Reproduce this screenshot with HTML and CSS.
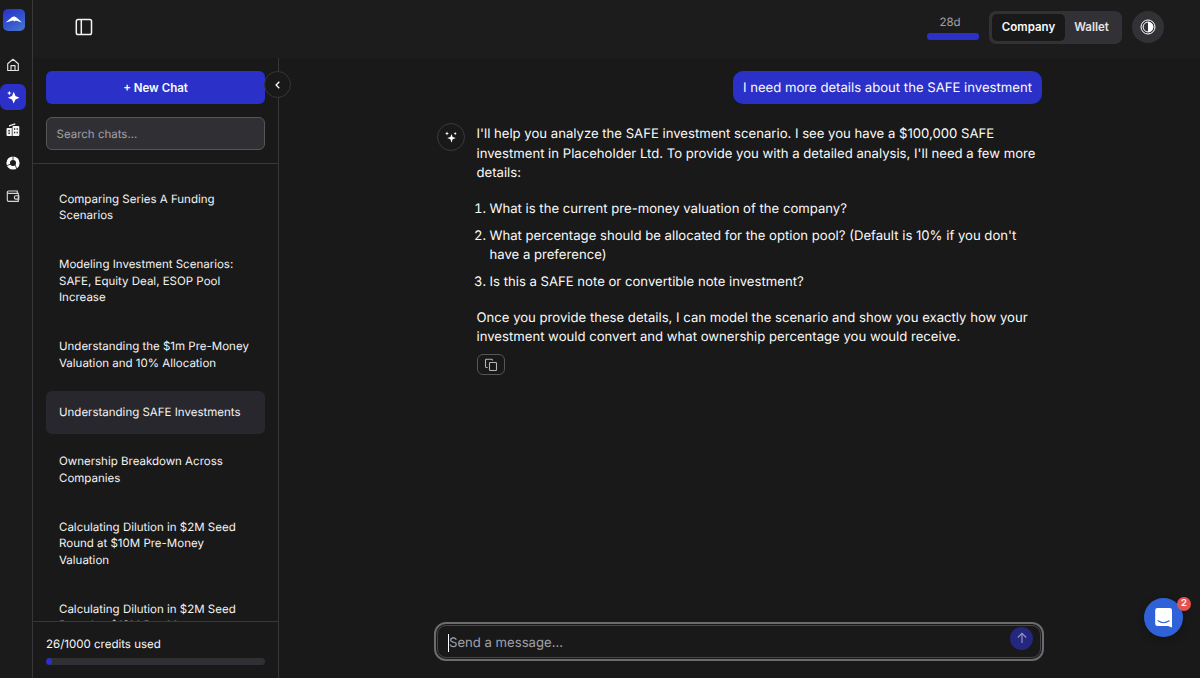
FILE: index.html
```html
<!DOCTYPE html>
<html lang="en">
<head>
<meta charset="utf-8">
<title>Understanding SAFE Investments</title>
<link rel="stylesheet" href="styles.css">
</head>
<body>
<div class="app">
  <nav class="rail">
    <a class="logo"><svg width="22" height="22" viewBox="0 0 22 22"><defs><linearGradient id="lg" x1="0" y1="0" x2="0.6" y2="1"><stop offset="0" stop-color="#2931cd"/><stop offset=".5" stop-color="#2f4bce"/><stop offset="1" stop-color="#426fcb"/></linearGradient></defs><rect width="22" height="22" rx="5" fill="url(#lg)"/><path d="M2.600 13.600L8.600 8.400q2.400-2 4.800 0L19 13.600 12.900 11.600l-1.300 1-1.500-1.200z" fill="#fff"/></svg></a>
    <a class="rail-item"><svg width="14" height="14" viewBox="0 0 14 14" fill="none" stroke="#e4e4e7" stroke-width="1.15" stroke-linejoin="round"><path d="M1.700 5.700L7 1.300 12.300 5.700v6.800H1.700zM5 12.200V7.600h4v4.600"/></svg></a>
    <a class="rail-item active"><svg width="16" height="16" viewBox="0 0 16 16" fill="#fff"><path d="M8.700 2.800L10.500 7l4 1.700-4 1.700-1.800 4.100-1.700-4.100-4.100-1.700L7 7zM4.300 1.800l.7 1.600 1.600.7-1.600.7-.7 1.600-.7-1.600L2 4.100l1.600-.7z"/></svg></a>
    <a class="rail-item"><svg width="14" height="14" viewBox="0 0 14 14"><path d="M3.600 3.500V2.700L9.300.9" fill="none" stroke="#f4f4f5" stroke-width="1.200"/><path fill="#f4f4f5" fill-rule="evenodd" d="M1.500 5H5.800V12.900H1.500Q.5 12.900.5 11.900V6Q.5 5 1.500 5zM2.400 7v1.400h1.400V7zM2.400 9.600V11h1.400V9.600zM6.500 3.900Q6.500 2.900 7.500 2.900h4.800q1 0 1 1v8q0 1-1 1H6.500zM8 5.300v1.400h1.200V5.300zM10.600 5.300v1.400h1.200V5.300zM8 8.800v1.400h1.200V8.800zM10.600 8.800v1.400h1.200V8.800z"/></svg></a>
    <a class="rail-item"><svg width="14" height="14" viewBox="0 0 14 14" fill="none"><circle cx="7" cy="7" r="4.800" stroke="#fafafa" stroke-width="3.600"/><path d="M7 0v5M.7 9.700l4.300-1.700M10.900 13L8.800 8.400" stroke="#1b1b1b" stroke-width=".8"/></svg></a>
    <a class="rail-item"><svg width="14" height="14" viewBox="0 0 14 14" fill="none" stroke="#d4d4d8" stroke-width="1.150"><path d="M11.300 4.300V2H2.700Q1.300 2 1.300 3.100t1.400 1.200h9.600v8H2.700q-1.400 0-1.400-1.300V3.100M12.800 6.700H10a1.700 1.700 0 0 0 0 3.400h2.800z"/></svg></a>
  </nav>
  <div class="page">
    <header class="topbar">
      <svg class="panel-icon" width="18" height="18" viewBox="0 0 18 18" fill="none" stroke="#f4f4f5" stroke-width="1.500"><rect x="1.300" y="1.500" width="15.200" height="15" rx="1.800"/><path d="M6.300 1.500v15"/></svg>
      <div class="top-actions">
        <div class="trial"><span>28d</span><div class="trial-bar"></div></div>
        <div class="switch"><button class="tab selected">Company</button><button class="tab">Wallet</button></div>
        <button class="theme"><svg width="16" height="16" viewBox="0 0 16 16" fill="none" stroke="#fff"><circle cx="8" cy="8" r="7" stroke-width="1"/><circle cx="8" cy="8" r="4.900" stroke-width="1"/><path d="M8 2.700a5.300 5.300 0 0 1 0 10.600z" fill="#fff" stroke="none"/></svg></button>
      </div>
    </header>
    <div class="workspace">
      <aside class="sidebar">
        <div class="side-head">
          <button class="new-chat">+ New Chat</button>
          <div class="search">Search chats...</div>
        </div>
        <ul class="chats">
          <li>Comparing Series A Funding Scenarios</li>
          <li>Modeling Investment Scenarios: SAFE, Equity Deal, ESOP Pool Increase</li>
          <li>Understanding the $1m Pre-Money Valuation and 10% Allocation</li>
          <li class="current">Understanding SAFE Investments</li>
          <li>Ownership Breakdown Across Companies</li>
          <li>Calculating Dilution in $2M Seed Round at $10M Pre-Money Valuation</li>
          <li>Calculating Dilution in $2M Seed Round at $10M Pre-M</li>
        </ul>
        <div class="credits"><span>26/1000 credits used</span><div class="meter"><div class="meter-fill"></div></div></div>
        <button class="collapse"><svg width="10" height="10" viewBox="0 0 10 10" fill="none" stroke="#fff" stroke-width="1.300"><path d="M6.300 1.800L3.100 5l3.200 3.200"/></svg></button>
      </aside>
      <main class="conversation">
        <div class="thread">
          <div class="user-msg">I need more details about the SAFE investment</div>
          <div class="reply">
            <div class="avatar"><svg width="14" height="14" viewBox="0 0 14 14" fill="#fff"><path d="M7.500 4l1.100 3 3.200 1.100-3.200 1.100-1.100 3.500-1.100-3.500-3.200-1.100 3.200-1.100zM3 1.500l.6 1.400 1.400.6-1.400.6L3 5.500l-.6-1.400L1 3.500l1.400-.6zM11.200 2l.5 1.100 1.100.5-1.100.5-.5 1.100-.5-1.100-1.100-.5 1.100-.5z"/></svg></div>
            <div class="answer">
              <p>I'll help you analyze the SAFE investment scenario. I see you have a $100,000 SAFE investment in Placeholder Ltd. To provide you with a detailed analysis, I'll need a few more details:</p>
              <ol>
                <li>What is the current pre-money valuation of the company?</li>
                <li>What percentage should be allocated for the option pool? (Default is 10% if you don't have a preference)</li>
                <li>Is this a SAFE note or convertible note investment?</li>
              </ol>
              <p>Once you provide these details, I can model the scenario and show you exactly how your investment would convert and what ownership percentage you would receive.</p>
              <button class="copy"><svg width="14" height="14" viewBox="0 0 14 14" fill="none" stroke="#b4b4b8" stroke-width="1.100"><rect x="5.500" y="4.500" width="7" height="8" rx=".8"/><path d="M3.700 9.500H2.400q-.9 0-.9-.9V2.200q0-.9.900-.9h5.100q.9 0 .9.900v.4"/></svg></button>
            </div>
          </div>
        </div>
        <div class="composer"><div class="composer-field"><span class="placeholder">Send a message...</span><button class="send"><svg width="14" height="14" viewBox="0 0 14 14" fill="none" stroke="#8f91bd" stroke-width="1.200"><path d="M7 12V2.500M2.800 6.500L7 2.400l4.200 4.100"/></svg></button></div></div>
      </main>
    </div>
  </div>
  <div class="messenger"><svg width="20" height="22" viewBox="0 0 20 22"><path d="M3.500 1h12.200q2.300 0 2.300 2.300V20.500l-4-1.500H3.500Q1.200 19 1.200 16.700V3.300Q1.200 1 3.500 1z" fill="#fff"/><path d="M4 13.800q5.600 3.800 11.200 0" fill="none" stroke="#2f62d9" stroke-width="1.100" stroke-linecap="round"/></svg><span class="badge">2</span></div>
</div>
</body>
</html>
```
FILE: styles.css
```css
* { box-sizing: border-box; }
body { margin: 0; background: #191919; color: #fafafa; font-family: Inter, "Liberation Sans", sans-serif; text-rendering: geometricPrecision; }
button { border: 0; padding: 0; margin: 0; font: inherit; color: inherit; display: flex; align-items: center; justify-content: center; }
svg { display: block; flex: none; }
.app { position: relative; width: 1200px; height: 678px; display: flex; overflow: hidden; }

.rail { width: 33px; flex: none; border-right: 1px solid #37373a; background: #1b1b1b; display: flex; flex-direction: column; padding-top: 9px; gap: 6.800px; }
.logo { margin: 0 0 13.800px 3px; }
.rail-item { width: 26px; height: 26px; display: flex; align-items: center; justify-content: center; border-radius: 6.500px; }
.rail-item.active { background: #2a30c8; }

.page { flex: 1; min-width: 0; display: flex; flex-direction: column; }
.topbar { height: 58px; flex: none; background: #1c1c1c; display: flex; align-items: center; justify-content: space-between; padding: 0 36px 4px 42px; }
.top-actions { display: flex; align-items: center; gap: 10px; }
.trial { width: 52px; display: flex; flex-direction: column; gap: 3px; font-size: 11.500px; line-height: 16px; color: #a1a1aa; text-align: center; }
.trial span { padding-right: 6px; }
.trial-bar { height: 7px; border-radius: 3px; background: #2a30c8; }
.switch { height: 33px; width: 133px; padding: 3px; border-radius: 7px; background: #323236; display: flex; }
.tab { font-size: 11.500px; font-weight: 600; color: #e4e4e7; background: none; flex: 1; padding-right: 1px; }
.tab.selected { flex: none; width: 73px; background: #191919; border-radius: 5px; color: #fafafa; padding: 0; }
.theme { width: 32px; height: 32px; border-radius: 50%; background: #323236; }

.workspace { flex: 1; min-height: 0; display: flex; }
.sidebar { position: relative; width: 246px; flex: none; border-right: 1px solid #37373a; display: flex; flex-direction: column; }
.side-head { height: 106px; flex: none; border-bottom: 1px solid #37373a; padding: 13px 13px 0; display: flex; flex-direction: column; gap: 13px; }
.new-chat { height: 33px; flex: none; border-radius: 6px; background: #2a30c8; font-size: 11.500px; font-weight: 600; }
.search { height: 33px; flex: none; border: 1px solid #55555a; border-radius: 6px; background: #303034; color: #a1a1aa; font-size: 11.500px; line-height: 32px; padding-left: 9.500px; }
.chats { flex: 1; min-height: 0; overflow: hidden; list-style: none; margin: 0; padding: 13.600px 13px 0; display: flex; flex-direction: column; gap: 6.700px; }
.chats li { flex: none; padding: 13.050px 13px; border-radius: 6px; font-size: 11.500px; line-height: 16.430px; color: #f4f4f5; }
.chats .current { background: #27272d; }
.credits { height: 57px; flex: none; border-top: 1px solid #37373a; padding: 14px 13px 0; font-size: 11.500px; line-height: 16px; display: flex; flex-direction: column; gap: 6px; }
.meter { height: 7px; border-radius: 4px; background: #303034; overflow: hidden; }
.meter-fill { width: 6px; height: 7px; border-radius: 4px; background: #2a30c8; }
.collapse { position: absolute; right: -13px; top: 13px; width: 27px; height: 27px; border-radius: 50%; border: 1px solid #37373a; background: #191919; }

.conversation { flex: 1; min-width: 0; display: flex; flex-direction: column; justify-content: space-between; padding: 13px 156px 17px 156px; }
.thread { display: flex; flex-direction: column; padding: 0 2px 0 2px; gap: 20px; }
.user-msg { align-self: flex-end; background: #2a30c8; border-radius: 10px; padding: 1px 10px 0; font-size: 13.130px; line-height: 32px; white-space: nowrap; }
.reply { display: flex; gap: 12px; font-size: 13.130px; line-height: 19.700px; }
.avatar { width: 28px; height: 28px; flex: none; border: 1px solid #3a3a3d; border-radius: 50%; display: flex; align-items: center; justify-content: center; margin: -1px 0 0 -0.500px; }
.answer { flex: 1; padding-top: 0.900px; margin-right: -1px; }
.answer p { margin: 0; }
.answer ol { margin: 16.400px 0; padding-left: 13px; display: flex; flex-direction: column; gap: 6.600px; }
.copy { margin-top: 6px; width: 28px; height: 21px; border: 1px solid #55555a; border-radius: 6px; background: none; }
.composer { height: 39px; margin-left: -1px; border: 2px solid #6b6b70; border-radius: 12px; padding: 1px; }
.composer-field { height: 33px; border: 1px solid #46464a; border-radius: 9px; display: flex; align-items: center; justify-content: space-between; padding: 0 7px 5px 10px; }
.placeholder { color: #a1a1aa; font-size: 13.130px; line-height: 18px; border-left: 1px solid #fff; margin-top: 8px; }
.send { width: 23px; height: 23px; border-radius: 50%; background: #24277d; margin-top: -2px; }

.messenger { position: absolute; left: 1144px; top: 598px; width: 39px; height: 39px; border-radius: 50%; background: #2f62d9; display: flex; align-items: center; justify-content: center; box-shadow: 0 2px 10px rgba(0,0,0,.25); }
.badge { position: absolute; right: -8px; top: -1px; width: 14px; height: 14px; border-radius: 50%; background: #e5534f; font-size: 9.500px; font-weight: 600; line-height: 14px; text-align: center; }
```
